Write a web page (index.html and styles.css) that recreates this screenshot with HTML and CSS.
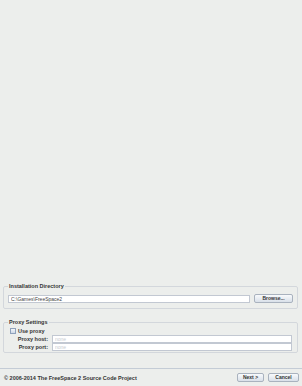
FILE: index.html
```html
<!DOCTYPE html>
<html lang="en">
<head>
    <meta charset="UTF-8">
    <title>Installer</title>
    <link rel="stylesheet" href="styles.css">
</head>
<body>
    <div class="window">
        <div class="spacer"></div>

        <!-- Installation directory -->
        <fieldset class="group">
            <legend>Installation Directory</legend>
            <div class="dir-row">
                <input class="field" type="text" value="C:\Games\FreeSpace2">
                <button class="btn browse-btn">Browse...</button>
            </div>
        </fieldset>

        <!-- Proxy settings -->
        <fieldset class="group proxy-group">
            <legend>Proxy Settings</legend>
            <label class="check-row"><span class="checkbox"></span>Use proxy</label>
            <div class="proxy-row">
                <span class="proxy-label">Proxy host:</span>
                <input class="field" type="text" placeholder="none">
            </div>
            <div class="proxy-row">
                <span class="proxy-label">Proxy port:</span>
                <input class="field" type="text" placeholder="none">
            </div>
        </fieldset>

        <div class="footer">
            <span class="credits">&copy; 2006-2014 The FreeSpace 2 Source Code Project</span>
            <div class="footer-buttons">
                <button class="btn next-btn">Next &gt;</button>
                <button class="btn cancel-btn">Cancel</button>
            </div>
        </div>
    </div>
</body>
</html>
```

FILE: styles.css
```css
:root {
    --window-bg: #eceeec;
    --border: #d3d7dc;
    --field-border: #c2c8d2;
    --text: #333333;
}

body {
    margin: 0;
    background: var(--window-bg);
    font-family: 'Liberation Sans', Arial, sans-serif;
    color: var(--text);
}

.window {
    display: flex;
    flex-direction: column;
    height: 386px;
    box-sizing: border-box;
}

.spacer {
    flex: 1;
}

.group {
    margin: 0 4px 0 3px;
    padding: 5px 4px 5px 4px;
    border: 1px solid var(--border);
    border-radius: 2px;
    min-width: 0;
}

.group legend {
    font-size: 5.5px;
    font-weight: bold;
    padding: 0 1px;
    margin-left: 0;
}

.proxy-group {
    margin-top: 10px;
    padding-top: 1px;
    padding-bottom: 1px;
}

.dir-row {
    display: flex;
    align-items: center;
    gap: 4px;
}

.field {
    flex: 1;
    min-width: 0;
    height: 6px;
    padding: 0 2px;
    border: 1px solid var(--field-border);
    background: #ffffff;
    font-family: inherit;
    font-size: 5px;
    color: #444;
    box-sizing: content-box;
}

.field::placeholder {
    color: #c8ccd2;
}

.btn {
    font-family: inherit;
    font-size: 5px;
    font-weight: bold;
    color: #333;
    height: 9px;
    padding: 0 6px;
    border: 1px solid #a9b2be;
    border-radius: 2px;
    background: linear-gradient(#f8fafc, #d9e0e9);
    line-height: 7px;
}

.browse-btn {
    width: 39px;
    padding: 0;
}

.check-row {
    display: flex;
    align-items: center;
    gap: 2px;
    font-size: 5.5px;
    font-weight: bold;
    margin: 1px 0 1px 2px;
    height: 7px;
}

.checkbox {
    width: 4px;
    height: 4px;
    border: 1px solid #8ea1bb;
    background: linear-gradient(#f4f7fb, #cdd8e6);
}

.proxy-row {
    display: flex;
    align-items: center;
    gap: 4px;
    margin: 0 1px 0 0;
    height: 8px;
}

.proxy-label {
    width: 40px;
    text-align: right;
    font-size: 5.5px;
    font-weight: bold;
}

.footer {
    display: flex;
    align-items: center;
    justify-content: space-between;
    margin-top: 15px;
    padding: 4px 3px 4px 4px;
    border-top: 1px solid #c4ccd6;
}

.credits {
    font-size: 5.5px;
    font-weight: bold;
}

.footer-buttons {
    display: flex;
    gap: 4px;
}

.next-btn {
    width: 27px;
    padding: 0;
}

.cancel-btn {
    width: 31px;
    padding: 0;
}
```
